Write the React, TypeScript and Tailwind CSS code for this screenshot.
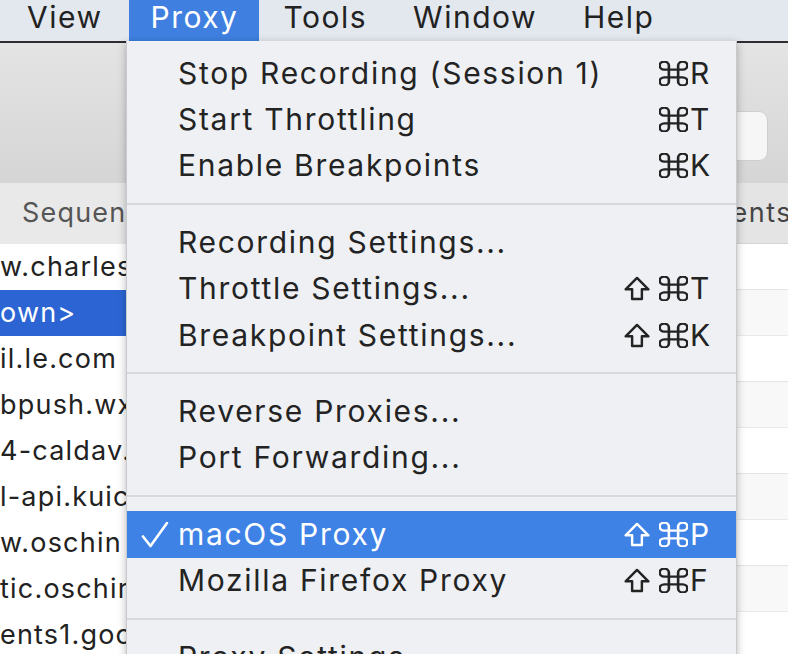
type MenuEntry =
  | { kind: "item"; label: string; keys?: string[]; checked?: boolean; active?: boolean }
  | { kind: "sep" };

const menu: MenuEntry[] = [
  { kind: "item", label: "Stop Recording (Session 1)", keys: ["cmd", "R"] },
  { kind: "item", label: "Start Throttling", keys: ["cmd", "T"] },
  { kind: "item", label: "Enable Breakpoints", keys: ["cmd", "K"] },
  { kind: "sep" },
  { kind: "item", label: "Recording Settings..." },
  { kind: "item", label: "Throttle Settings...", keys: ["shift", "cmd", "T"] },
  { kind: "item", label: "Breakpoint Settings...", keys: ["shift", "cmd", "K"] },
  { kind: "sep" },
  { kind: "item", label: "Reverse Proxies..." },
  { kind: "item", label: "Port Forwarding..." },
  { kind: "sep" },
  { kind: "item", label: "macOS Proxy", keys: ["shift", "cmd", "P"], checked: true, active: true },
  { kind: "item", label: "Mozilla Firefox Proxy", keys: ["shift", "cmd", "F"] },
  { kind: "sep" },
  { kind: "item", label: "Proxy Settings..." }
];

const hosts = [
  "w.charles",
  "own>",
  "il.le.com",
  "bpush.wx",
  "4-caldav.",
  "l-api.kuic",
  "w.oschin",
  "tic.oschir",
  "ents1.goo"
];

function CommandGlyph() {
  return (
    <svg width="29" height="25" viewBox="2.6 2.6 18.8 18.8" fill="none" stroke="currentColor" strokeWidth="1.7" preserveAspectRatio="none">
      <path d="M15 6v12a3 3 0 1 0 3-3H6a3 3 0 1 0 3 3V6a3 3 0 1 0-3 3h12a3 3 0 1 0-3-3" />
    </svg>
  );
}

function ShiftGlyph() {
  return (
    <svg width="26" height="25" viewBox="4 4 16 15" fill="none" stroke="currentColor" strokeWidth="1.5" strokeLinejoin="round">
      <path d="M9 18v-6H5l7-7 7 7h-4v6H9z" />
    </svg>
  );
}

function Shortcut({ keys }: { keys: string[] }) {
  return (
    <div className="flex flex-none items-center">
      {keys.map((k) =>
        k === "shift" ? (
          <span key={k} className="mr-[9px] flex">
            <ShiftGlyph />
          </span>
        ) : k === "cmd" ? (
          <span key={k} className="mr-[2px] flex">
            <CommandGlyph />
          </span>
        ) : (
          <span key={k} className="w-[22px] tracking-normal">
            {k}
          </span>
        )
      )}
    </div>
  );
}

function ProxyMenu() {
  return (
    <div className="absolute left-[126px] top-[41px] h-[630px] w-[611px] border-x border-[#c8cacd] bg-[#eef0f3] pt-[9px] text-[#232323] shadow-[0_2px_8px_rgba(0,0,0,0.28)]">
      {menu.map((entry, i) =>
        entry.kind === "sep" ? (
          <div key={i} className="flex h-[30px] items-center">
            <div className="h-[2px] w-full bg-[#d7d9dc]" />
          </div>
        ) : (
          <div
            key={i}
            className={
              entry.active
                ? "flex h-[46.4px] items-center bg-[#3e82e6] pr-[24px] text-white"
                : "flex h-[46.4px] items-center pr-[24px]"
            }
          >
            <div className="flex w-[51px] flex-none items-center pl-[14px]">
              {entry.checked && (
                <svg width="28" height="27" viewBox="0 0 28 27" fill="none" stroke="currentColor" strokeWidth="2.6" strokeLinecap="round" strokeLinejoin="round">
                  <path d="M2 15.5 9.5 25 26 2" />
                </svg>
              )}
            </div>
            <span className="flex-1 whitespace-nowrap">{entry.label}</span>
            {entry.keys && <Shortcut keys={entry.keys} />}
          </div>
        )
      )}
    </div>
  );
}

export default function App() {
  return (
    <div className="relative h-[654px] w-[788px] overflow-hidden bg-white font-['Inter','Liberation_Sans',sans-serif] text-[30px] tracking-[1.7px]">
      {/* menu bar */}
      <div className="flex h-[41px] bg-[#e3e8ef] text-[30px] tracking-[1.5px] text-[#222]">
        <div className="flex h-full items-center pb-[6px] pl-[27px] pr-[27px]">View</div>
        <div className="flex h-full items-center bg-[#3e7fe0] px-[21px] pb-[6px] text-white">Proxy</div>
        <div className="flex h-full items-center pb-[6px] pl-[24px] pr-[22px]">Tools</div>
        <div className="flex h-full items-center pb-[6px] pl-[24px] pr-[22px]">Window</div>
        <div className="flex h-full items-center pb-[6px] pl-[24px] pr-[22px]">Help</div>
      </div>

      {/* window behind the menu */}
      <div className="border-t-2 border-[#2e2e2e]">
        <div className="flex h-[140px] items-end justify-end bg-gradient-to-b from-[#e4e4e4] to-[#d5d5d5] pb-[22px] pr-[20px]">
          <div className="h-[50px] w-[240px] rounded-[9px] border border-[#cfcfcf] bg-[#f6f6f6]" />
        </div>
        <div className="flex">
          <div className="w-[360px] text-[27px] tracking-[1.2px] text-[#222]">
            <div className="flex h-[61px] items-center bg-[#e9e9e9] pl-[22px] text-[#555]">Sequence</div>
            {hosts.map((h, i) => (
              <div
                key={h}
                className={
                  i === 1
                    ? "flex h-[46px] items-center bg-[#2c65d3] text-white"
                    : "flex h-[46px] items-center"
                }
              >
                <span className="whitespace-nowrap">{h}</span>
              </div>
            ))}
          </div>
          <div className="flex-1 text-[27px] tracking-[1.5px] text-[#333]">
            <div className="flex h-[61px] items-center justify-end border-b border-[#d4d4d4] bg-[#e4e4e4]">
              <span className="-mr-[4px] text-[#444]">Contents</span>
            </div>
            {hosts.map((h, i) => (
              <div key={h} className={i % 2 === 0 ? "h-[46px] border-b border-[#e4e4e4] bg-white" : "h-[46px] border-b border-[#e9e9e9] bg-[#f8f8f8]"} />
            ))}
          </div>
        </div>
      </div>

      <ProxyMenu />
    </div>
  );
}
